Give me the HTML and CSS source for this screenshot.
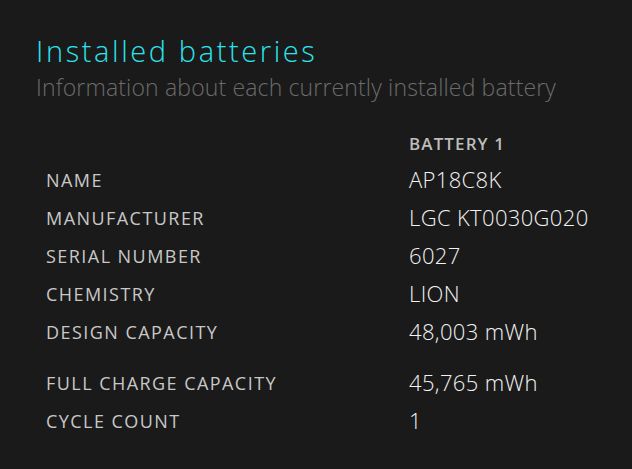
FILE: index.html
```html
<!DOCTYPE html>
<html>
<head>
<meta charset="utf-8">
<link rel="stylesheet" href="styles.css">
</head>
<body>
<main class="page">
  <h1 class="title">Installed batteries</h1>
  <p class="subtitle">Information about each currently installed battery</p>
  <div class="table">
    <div class="label"></div><div class="head">BATTERY 1</div>
    <div class="label">NAME</div><div class="value">AP18C8K</div>
    <div class="label">MANUFACTURER</div><div class="value">LGC KT0030G020</div>
    <div class="label">SERIAL NUMBER</div><div class="value">6027</div>
    <div class="label">CHEMISTRY</div><div class="value">LION</div>
    <div class="label">DESIGN CAPACITY</div><div class="value">48,003 mWh</div>
    <div class="label gap">FULL CHARGE CAPACITY</div><div class="value gap">45,765 mWh</div>
    <div class="label">CYCLE COUNT</div><div class="value">1</div>
  </div>
</main>
</body>
</html>
```
FILE: styles.css
```css
html, body {
  margin: 0;
  padding: 0;
  background: #1a1a1a;
  height: 100%;
}
.page {
  padding: 34px 0 0 36px;
  font-family: "Open Sans", "Noto Sans", sans-serif;
}
.title {
  margin: 0;
  font-weight: 300;
  font-size: 29px;
  line-height: 34px;
  letter-spacing: 2.6px;
  color: #2ce3ec;
}
.subtitle {
  margin: 5px 0 0 0;
  font-weight: 300;
  font-size: 23px;
  line-height: 28px;
  letter-spacing: 0.15px;
  color: #6b6b6b;
}
.table {
  display: grid;
  grid-template-columns: 363px auto;
  grid-template-rows: 32px repeat(5, 38px) 51px 38px;
  margin: 27px 0 0 10px;
  align-items: start;
}
.label {
  font-size: 18px;
  font-weight: 400;
  letter-spacing: 1.45px;
  color: #c8c8c8;
  line-height: 38px;
  padding-top: 1px;
}
.head {
  font-size: 17px;
  font-weight: 600;
  letter-spacing: 1.1px;
  color: #bdbdbd;
  line-height: 32px;
}
.value {
  font-size: 22px;
  font-weight: 300;
  letter-spacing: 0.35px;
  color: #f2f2f2;
  line-height: 38px;
}
.gap {
  margin-top: 13px;
}
```
